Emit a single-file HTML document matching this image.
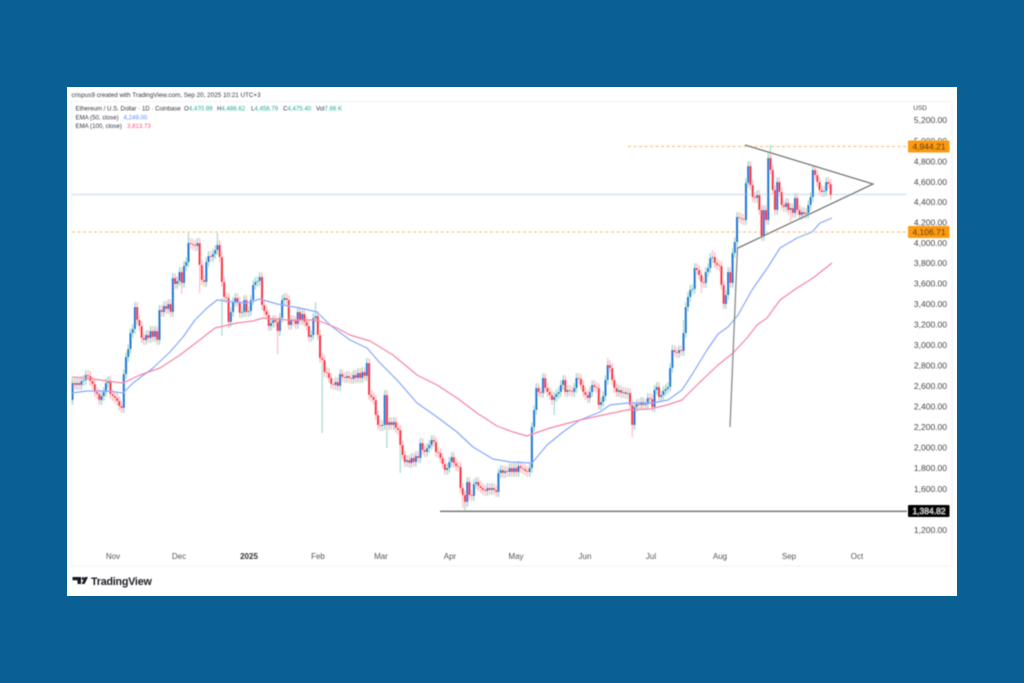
<!DOCTYPE html>
<html lang="en"><head><meta charset="utf-8"><title>ETH/USD chart</title>
<style>
html,body{margin:0;padding:0;background:#0b6093;width:1024px;height:683px;overflow:hidden}
svg{display:block}
text{font-family:"Liberation Sans",sans-serif;font-size:6.1px;fill:#33363e}
.ax{font-size:8.5px;text-anchor:end;fill:#44474f}
.t{font-size:8px;text-anchor:middle;fill:#555}
.l{font-size:8.5px;text-anchor:middle;fill:#222}
.c{vector-effect:non-scaling-stroke;fill:none}
</style></head><body>
<svg width="1024" height="683" viewBox="0 0 1024 683" xmlns="http://www.w3.org/2000/svg">
<defs>
<filter id="s" filterUnits="userSpaceOnUse" x="0" y="0" width="1024" height="683"><feGaussianBlur stdDeviation="0.4"/></filter>
<path id="b" class="c" d="M0 400V383M2 385V383M4 385V381M5 381V380M6 380V375M13 400V396M14 396V392M15 392V383M16 383V381M23 408V374M24 374V357M25 357V349M26 349V333M27 333V329M28 329V307M33 340V335M35 338V331M37 337V331M39 340V310M41 312V306M43 309V304M45 312V278M47 284V281M48 281V272M50 283V266M51 266V262M52 262V243M56 246V243M60 282V262M61 262V256M63 257V254M64 254V250M65 250V245M71 322V312M72 312V302M73 302V298M76 313V312M77 312V300M79 312V311M80 311V300M81 300V285M82 285V282M83 282V281M84 281V277M89 326V323M90 323V320M93 331V318M94 318V300M95 300V298M98 325V320M101 324V312M103 320V314M107 337V335M108 335V318M109 318V316M118 385V382M120 386V374M123 378V376M126 379V375M128 378V373M130 378V372M132 376V363M139 426V425M140 425V395M142 425V422M144 425V422M150 462V460M152 463V458M154 462V456M156 458V443M159 452V448M160 448V445M161 445V440M168 470V468M169 468V462M170 462V457M177 502V482M180 496V484M181 484V482M186 491V488M188 490V488M191 492V473M192 473V470M194 473V471M196 472V468M198 472V468M200 472V466M205 472V468M206 468V427M207 427V410M208 410V388M211 393V378M216 400V397M217 397V394M218 394V392M219 392V385M220 385V380M222 392V390M225 392V388M226 388V378M232 398V392M233 392V385M237 405V402M238 402V396M239 396V380M240 380V365M245 392V390M247 393V392M249 394V393M252 425V407M253 407V404M255 405V402M257 405V404M258 404V398M261 407V390M262 390V387M264 397V395M265 395V391M266 391V389M267 389V387M268 387V368M269 368V350M272 353V350M274 351V333M275 333V307M276 307V297M277 297V290M278 290V289M279 289V268M284 283V272M285 272V268M286 268V258M287 258V257M293 304V295M294 295V272M296 283V253M297 253V242M298 242V217M302 220V183M303 183V166M307 198V195M310 236V210M312 220V158M316 210V182M320 207V203M322 210V208M324 213V198M327 215V212M329 214V213M330 213V205M331 205V197M332 197V170M337 192V191M338 191V182"/>
<path id="r" class="c" d="M1 383V385M3 383V385M7 375V376M8 376V381M9 381V384M10 384V392M11 392V394M12 394V400M17 381V394M18 394V396M19 396V398M20 398V401M21 401V406M22 406V408M29 307V320M30 320V326M31 326V338M32 338V340M34 335V338M36 331V337M38 331V340M40 310V312M42 306V309M44 304V312M46 278V284M49 272V283M53 243V244M54 244V245M55 245V246M57 243V265M58 265V280M59 280V282M62 256V257M66 245V257M67 257V282M68 282V297M69 297V298M70 298V322M74 298V302M75 302V313M78 300V312M85 277V305M86 305V311M87 311V315M88 315V326M91 320V322M92 322V331M96 298V300M97 300V325M99 320V321M100 321V324M102 312V320M104 314V322M105 322V326M106 326V337M110 316V335M111 335V358M112 358V360M113 360V372M114 372V373M115 373V378M116 378V384M117 384V385M119 382V386M121 374V377M122 377V378M124 376V378M125 378V379M127 375V378M129 373V378M131 372V376M133 363V395M134 395V397M135 397V400M136 400V415M137 415V425M138 425V426M141 395V425M143 422V425M145 422V428M146 428V430M147 430V445M148 445V455M149 455V462M151 460V463M153 458V462M155 456V458M157 443V450M158 450V452M162 440V442M163 442V452M164 452V453M165 453V458M166 458V464M167 464V470M171 457V463M172 463V466M173 466V467M174 467V488M175 488V495M176 495V502M178 482V495M179 495V496M182 482V486M183 486V488M184 488V490M185 490V491M187 488V490M189 488V490M190 490V492M193 470V473M195 471V472M197 468V472M199 468V472M201 466V468M202 468V469M203 469V471M204 471V472M209 388V392M210 392V393M212 378V388M213 388V392M214 392V395M215 395V400M221 380V392M223 390V391M224 391V392M227 378V379M228 379V385M229 385V392M230 392V395M231 395V398M234 385V387M235 387V388M236 388V405M241 365V368M242 368V380M243 380V388M244 388V392M246 390V393M248 392V394M250 393V405M251 405V425M254 404V405M256 402V405M259 398V399M260 399V407M263 387V397M270 350V352M271 352V353M273 350V351M280 268V270M281 270V275M282 275V282M283 282V283M288 257V263M289 263V265M290 265V266M291 266V285M292 285V304M295 272V283M299 217V218M300 218V219M301 219V220M304 166V185M305 185V197M306 197V198M308 195V210M309 210V236M311 210V220M313 158V170M314 170V190M315 190V210M317 182V192M318 192V205M319 205V207M321 203V210M323 208V213M325 198V210M326 210V215M328 212V214M333 170V175M334 175V182M335 182V190M336 190V192M339 182V184M340 184V195"/>
</defs>
<rect width="1024" height="683" fill="#0b6093"/>
<rect x="67" y="87" width="890" height="509" fill="#fff"/>
<g filter="url(#s)">
<path d="M71.5 101.5H952V566H71.5Z" fill="none" stroke="#f2f3f5"/>
<text x="71.5" y="97" style="font-size:6.3px">crispus9 created with TradingView.com, Sep 20, 2025 10:21 UTC+3</text>
<text x="75.5" y="110.5">Ethereum / U.S. Dollar · 1D · Coinbase</text>
<text x="184" y="110.5">O<tspan style="fill:#22ab94">4,470.99</tspan></text>
<text x="217" y="110.5">H<tspan style="fill:#22ab94">4,486.62</tspan></text>
<text x="251" y="110.5">L<tspan style="fill:#22ab94">4,456.79</tspan></text>
<text x="283" y="110.5">C<tspan style="fill:#22ab94">4,475.40</tspan></text>
<text x="316" y="110.5">Vol<tspan style="fill:#22ab94">7.66 K</tspan></text>
<text x="75.5" y="119.5">EMA (50, close)</text><text x="123.5" y="119.5" style="fill:#5b8cff">4,249.00</text>
<text x="75.5" y="128.2">EMA (100, close)</text><text x="127" y="128.2" style="fill:#f7527f">3,813.73</text>

<path d="M72 194.5H907" stroke="#d6e4fa" stroke-width="1.6"/>
<path d="M72 232H907M628 146.5H907" stroke="#fbb768" stroke-width="1.1" stroke-dasharray="3 2.5"/>

<g transform="translate(72.5,0) scale(2.23,1)">
<g stroke="#a3dccd" stroke-width="1.2">
<use href="#b" y="-5"/><use href="#b" y="-4"/><use href="#b" y="-3"/><use href="#b" y="-2"/><use href="#b" y="-1"/><use href="#b" y="1"/><use href="#b" y="2"/><use href="#b" y="3"/><use href="#b" y="4"/><use href="#b" y="5"/>
<path class="c" d="M112 360V433M67 298V336M109 302V318M141 425V448M147 440V473M216 397V415M176 502V511M52 243V233M65 245V233M313 145V170M57 250V262M274 320V330"/>
</g>
<g stroke="#fcbfc5" stroke-width="1.2">
<use href="#r" y="-5"/><use href="#r" y="-4"/><use href="#r" y="-3"/><use href="#r" y="-2"/><use href="#r" y="-1"/><use href="#r" y="1"/><use href="#r" y="2"/><use href="#r" y="3"/><use href="#r" y="4"/><use href="#r" y="5"/>
<path class="c" d="M92 331V354M49 283V294M57 265V293M251 425V437M175 495V508M240 365V358M322 208V222M282 282V293M287 250V258M70 322V328"/>
</g>
<use href="#b" stroke="#1f77d4" stroke-width="2"/>
<use href="#r" stroke="#f7343f" stroke-width="2"/>
</g>

<path d="M72 393L87 391L107 391L123 393L133 383L153 368L170 352L183 337L195 320L207 308L217 300L233 302L247 303L260 299L277 304L300 308L317 312L330 325L350 340L367 348L380 363L397 380L417 403L437 417L457 432L473 447L493 459L510 462L532 463L547 445L563 432L580 420L600 412L610 405L627 403L653 403L668 400L682 390L693 373L707 350L718 334L728 327L738 315L752 290L768 267L780 248L797 238L812 232L820 223L832 218" fill="none" stroke="#86a8fb" stroke-width="1.2" stroke-linejoin="round"/>
<path d="M72 377L87 378L107 381L123 383L140 375L160 368L180 355L197 342L215 328L237 323L253 321L263 318L287 320L317 320L337 328L350 335L370 341L393 355L417 375L437 385L457 398L477 413L497 426L513 432L527 436L550 428L580 420L603 415L627 410L650 409L667 405L682 400L697 385L718 365L733 353L747 338L757 325L767 318L780 300L797 288L813 278L832 263" fill="none" stroke="#f486a4" stroke-width="1.2" stroke-linejoin="round"/>

<path d="M745 145L873 184L738 248" fill="none" stroke="#777" stroke-width="1.3"/>
<path d="M737.5 247L730 427" fill="none" stroke="#8a8a8a" stroke-width="1.3"/>
<path d="M440 511.3H907" stroke="#808080" stroke-width="1.7"/>

<text class="ax" x="927" y="110" style="font-size:6.5px">USD</text>
<text class="ax" x="947" y="123">5,200.00</text>
<text class="ax" x="947" y="144">5,000.00</text>
<text class="ax" x="947" y="164.5">4,800.00</text>
<text class="ax" x="947" y="185">4,600.00</text>
<text class="ax" x="947" y="205">4,400.00</text>
<text class="ax" x="947" y="225.5">4,200.00</text>
<text class="ax" x="947" y="246">4,000.00</text>
<text class="ax" x="947" y="266">3,800.00</text>
<text class="ax" x="947" y="286.5">3,600.00</text>
<text class="ax" x="947" y="307">3,400.00</text>
<text class="ax" x="947" y="327.5">3,200.00</text>
<text class="ax" x="947" y="348">3,000.00</text>
<text class="ax" x="947" y="368.5">2,800.00</text>
<text class="ax" x="947" y="389">2,600.00</text>
<text class="ax" x="947" y="409.5">2,400.00</text>
<text class="ax" x="947" y="430">2,200.00</text>
<text class="ax" x="947" y="450.5">2,000.00</text>
<text class="ax" x="947" y="471">1,800.00</text>
<text class="ax" x="947" y="492">1,600.00</text>
<text class="ax" x="947" y="533">1,200.00</text>

<rect x="908" y="140.5" width="41.5" height="12" rx="1" fill="#fb9a0e"/>
<text class="l" x="929" y="149.5">4,944.21</text>
<rect x="908" y="226" width="41.5" height="12" rx="1" fill="#fb9a0e"/>
<text class="l" x="929" y="235">4,106.71</text>
<rect x="908" y="505" width="41.5" height="12" rx="1" fill="#000"/>
<text class="l" x="929" y="514" style="fill:#e8e8e8">1,384.82</text>

<text class="t" x="113" y="559">Nov</text>
<text class="t" x="179" y="559">Dec</text>
<text class="t" x="249" y="559" style="font-weight:bold;fill:#333">2025</text>
<text class="t" x="318" y="559">Feb</text>
<text class="t" x="381" y="559">Mar</text>
<text class="t" x="450" y="559">Apr</text>
<text class="t" x="516" y="559">May</text>
<text class="t" x="585" y="559">Jun</text>
<text class="t" x="651" y="559">Jul</text>
<text class="t" x="720" y="559">Aug</text>
<text class="t" x="789" y="559">Sep</text>
<text class="t" x="857" y="559">Oct</text>

<path d="M72.5 577H81V584H77.5V580.2H72.5ZM88 577L84.5 584H81.5L85 577Z" fill="#131722"/>
<circle cx="83" cy="578.5" r="1.4" fill="#131722"/>
<text x="91" y="585" style="font-size:10.7px;font-weight:bold;fill:#1a1d24;letter-spacing:-.2px">TradingView</text>
</g>
</svg>
</body></html>
